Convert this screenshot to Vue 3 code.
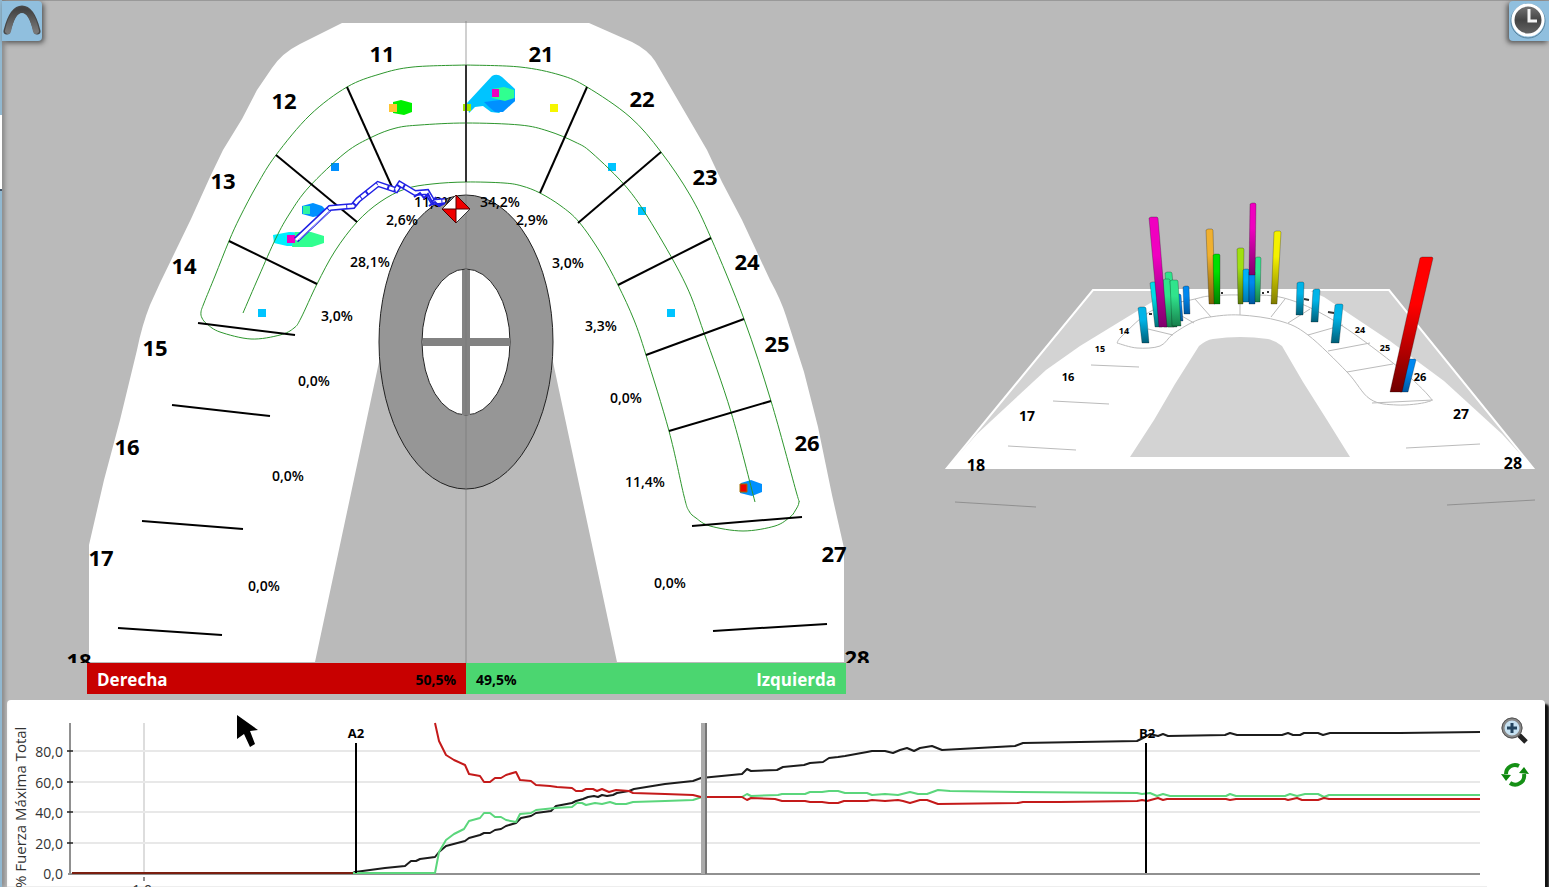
<script setup>
const smooth = (pts) => {
  let d = `M${pts[0][0]} ${pts[0][1]}`
  for (let i = 0; i < pts.length - 1; i++) {
    const a = pts[i - 1] || pts[i]
    const b = pts[i]
    const c = pts[i + 1]
    const e = pts[i + 2] || c
    d += `C${b[0] + (c[0] - a[0]) / 6} ${b[1] + (c[1] - a[1]) / 6} ${c[0] - (e[0] - b[0]) / 6} ${c[1] - (e[1] - b[1]) / 6} ${c[0]} ${c[1]}`
  }
  return d
}

const archBorder = smooth([
  [466, 65], [413, 67], [380, 74], [347, 87], [310, 115], [276, 155], [257, 185], [240, 217], [229, 241], [215, 276], [204, 303], [201, 312],
  [202, 318], [207, 324], [220, 332], [251, 339], [280, 335], [294, 328], [301, 318], [317, 284], [335, 251], [357, 222], [380, 202], [405, 189],
  [432, 184], [466, 182], [504, 183], [522, 186], [540, 193], [561, 206], [579, 222], [600, 252], [618, 285], [634, 320], [646, 355],
  [669, 431], [684, 496], [689, 511], [696, 518], [710, 526], [743, 531], [775, 526], [790, 517], [795, 511], [799, 502], [796, 491], [771, 401],
  [744, 319], [711, 238], [690, 195], [661, 152], [630, 117], [587, 87], [560, 75], [520, 67], [466, 65]
])
const archMiddle = smooth([
  [243, 313], [259, 276], [276, 238], [290, 213], [309, 187], [345, 153], [372, 137], [396, 128], [420, 125], [466, 123], [520, 125],
  [548, 131], [575, 142], [592, 153], [628, 189], [655, 229], [686, 285], [704, 333], [731, 412], [755, 502]
])

const dividers = [
  [347, 87, 392, 187], [276, 155, 357, 222], [229, 241, 317, 284], [198, 323, 295, 335], [172, 405, 270, 416], [142, 521, 243, 529],
  [118, 628, 222, 635], [587, 87, 540, 193], [661, 152, 578, 223], [711, 238, 618, 285], [744, 319, 646, 355], [771, 401, 669, 431],
  [802, 517, 692, 526], [827, 624, 713, 631]
]

const teeth = [
  ['11', 382, 62], ['12', 284, 109], ['13', 223, 189], ['14', 184, 274], ['15', 155, 356], ['16', 127, 455], ['17', 101, 566], ['18', 79, 669],
  ['21', 541, 62], ['22', 642, 107], ['23', 705, 185], ['24', 747, 270], ['25', 777, 352], ['26', 807, 451], ['27', 834, 562], ['28', 857, 666]
]

const forces = [
  ['11,8%', 434, 207], ['2,6%', 402, 225], ['28,1%', 370, 267], ['3,0%', 337, 321], ['0,0%', 314, 386], ['0,0%', 288, 481], ['0,0%', 264, 591],
  ['34,2%', 500, 207], ['2,9%', 532, 225], ['3,0%', 568, 268], ['3,3%', 601, 331], ['0,0%', 626, 403], ['11,4%', 645, 487], ['0,0%', 670, 588]
]

const contacts = [
  [331, 163, '#0090ff'], [608, 163, '#00c4ff'], [638, 207, '#00c4ff'], [667, 309, '#00c4ff'], [258, 309, '#00c4ff'], [550, 104, '#f6f600']
]

const sceneBorder = smooth([
  [1117, 343], [1123, 335], [1153, 310], [1195, 299], [1210, 296], [1240, 295], [1284, 298], [1333, 320], [1393, 363], [1428, 395],
  [1427, 402], [1397, 405], [1370, 399], [1347, 372], [1308, 335], [1280, 321], [1240, 315], [1210, 317], [1193, 322], [1173, 334],
  [1160, 346], [1137, 348], [1117, 343]
])
const sceneLines = [
  [1195, 299, 1211, 317], [1240, 296, 1240, 315], [1285, 299, 1271, 317], [1310, 309, 1288, 323], [1343, 325, 1308, 335],
  [1370, 343, 1328, 351], [1393, 364, 1347, 372], [1372, 403, 1433, 400], [1148, 329, 1173, 335], [1180, 315, 1194, 323],
  [1091, 365, 1139, 367], [1053, 401, 1109, 404], [1008, 446, 1076, 450], [1406, 448, 1480, 444]
]
const frontLines = [[955, 502, 1036, 507], [1447, 505, 1535, 500]]
const sceneTeeth = [
  ['18', 976, 471, 'large'], ['28', 1513, 469, 'large'], ['17', 1027, 421, 'medium'], ['27', 1461, 419, 'medium'], ['16', 1068, 381, 'small'],
  ['26', 1420, 381, 'small'], ['15', 1100, 352, 'tiny'], ['25', 1385, 351, 'tiny'], ['14', 1124, 334, 'tiny'], ['24', 1360, 333, 'tiny']
]

// Each column: top left, top right, top y, bottom left, bottom right, bottom y, colour
const columns = [
  [1138, 1146, 308, 1142, 1149, 343, 'cyan'], [1150, 1157, 283, 1155, 1162, 327, 'aqua'], [1177, 1181, 295, 1178, 1183, 321, 'blue'],
  [1183, 1189, 287, 1184, 1190, 314, 'blue'], [1165, 1172, 273, 1168, 1177, 327, 'teal'], [1163, 1170, 280, 1164, 1174, 327, 'teal'],
  [1170, 1178, 281, 1172, 1181, 326, 'teal'], [1149, 1158, 218, 1159, 1167, 327, 'magenta'], [1206, 1213, 230, 1209, 1215, 304, 'orange'],
  [1213, 1220, 255, 1214, 1220, 304, 'green'], [1237, 1244, 249, 1238, 1243, 304, 'lime'], [1243, 1249, 270, 1243, 1249, 302, 'sky'],
  [1255, 1261, 258, 1254, 1260, 302, 'teal'], [1249, 1255, 272, 1249, 1255, 304, 'blue'], [1250, 1256, 204, 1249, 1255, 275, 'magenta'],
  [1274, 1281, 232, 1271, 1277, 304, 'yellow'], [1297, 1304, 283, 1296, 1303, 315, 'cyan'], [1313, 1320, 290, 1311, 1318, 322, 'cyan'],
  [1335, 1343, 305, 1331, 1339, 343, 'cyan'], [1408, 1416, 360, 1400, 1408, 392, 'blue'], [1420, 1433, 258, 1390, 1402, 392, 'red']
]
const shades = [
  ['cyan', '#00b4e8', '#005f78'], ['aqua', '#00dce8', '#006f78'], ['blue', '#0088f0', '#0058a0'], ['teal', '#30e48c', '#18804c'],
  ['magenta', '#f000c0', '#80006c'], ['orange', '#f0b030', '#806008'], ['green', '#00e000', '#008000'], ['lime', '#a0e010', '#587808'],
  ['sky', '#00b0f8', '#0078b0'], ['yellow', '#f4f000', '#807c00'], ['red', '#ff0000', '#700000']
]
const columnPoints = (c) => `${c[0]},${c[2]} ${c[0] + 2},${c[2] - 1} ${c[1] - 1},${c[2] - 1} ${c[1]},${c[2]} ${c[4]},${c[5]} ${c[3]},${c[5]}`

const levels = [['80,0', 751], ['60,0', 782], ['40,0', 812], ['20,0', 843]]

const baseline = '72,873 353,873'
const rightCurve = '435,723 439,741 446,755 454,760 465,765 469,774 480,776 484,782 490,782 495,778 501,778 506,775 516,772 520,780 531,781 536,785 550,786 557,787 572,788 576,791 582,791 586,789 593,789 597,791 602,789 609,792 616,790 629,791 633,793 665,794 693,795 701,797 742,797 747,800 751,798 775,799 782,801 805,801 810,802 822,802 829,803 838,803 844,801 867,801 872,800 885,801 898,800 903,801 910,803 920,800 927,800 938,804 1018,803 1023,802 1060,802 1137,801 1142,800 1147,801 1158,798 1163,800 1167,799 1226,799 1230,800 1236,799 1285,799 1288,800 1297,798 1302,800 1318,800 1324,798 1329,799 1480,799'
const leftCurve = '353,873 435,873 439,852 446,840 454,834 464,829 469,821 480,818 484,813 490,813 495,817 501,817 506,820 516,822 520,814 531,813 536,810 555,808 572,807 577,803 582,803 586,805 595,803 602,804 610,802 616,804 626,804 633,802 665,801 693,800 702,797 742,797 747,794 751,796 778,795 782,794 805,794 810,792 822,792 829,791 838,791 845,793 867,793 872,795 885,794 898,795 910,792 918,794 927,794 938,790 950,791 1018,792 1137,793 1142,794 1150,793 1157,796 1163,794 1170,796 1226,796 1230,794 1236,796 1285,796 1290,794 1297,796 1305,794 1318,794 1324,797 1329,795 1480,795'
const totalCurve = '353,873 355,872 370,870 385,868 405,866 411,861 416,861 420,859 435,857 439,852 446,846 465,841 469,838 480,835 484,833 490,833 495,830 501,829 506,826 516,823 521,818 531,816 536,813 551,811 556,806 572,803 576,801 583,799 588,797 594,796 598,797 602,795 607,796 613,795 617,793 629,791 634,789 665,784 693,781 701,778 742,774 747,769 751,771 777,770 783,767 804,765 810,763 823,762 829,758 838,757 845,756 867,752 872,751 885,751 893,753 900,750 907,748 914,751 920,748 932,746 942,750 1015,746 1023,743 1137,741 1145,737 1150,734 1158,736 1163,734 1168,736 1225,735 1230,733 1237,735 1282,735 1288,733 1293,735 1300,735 1304,733 1318,733 1323,735 1330,733 1400,733 1480,732'

const trace = '296,240 330,208 353,206 358,200 378,184 396,190 400,184 415,193 427,192 433,202 445,201'
</script>

<template>
  <main class="page">
    <div class="edge"><span class="edge-blue"></span><span class="edge-white"></span><span class="edge-rest"></span></div>
    <button class="tab tab-left" type="button" aria-label="Arcada">
      <svg viewBox="0 0 40 40" aria-hidden="true">
        <defs>
          <linearGradient id="tube" x1="0" x2="0" y1="0" y2="1">
            <stop offset="0" stop-color="#444" /><stop offset="1" stop-color="#777" />
          </linearGradient>
        </defs>
        <path d="M5 30C9 14 14 8 20 8s11 6 15 22" fill="none" stroke="#484848" stroke-width="7" stroke-linecap="round" />
        <path d="M6 30C9 16 14 9 20 9s11 7 14 21" fill="none" stroke="url(#tube)" stroke-width="6" stroke-linecap="round" />
      </svg>
    </button>
    <button class="tab tab-right" type="button" aria-label="Tiempo">
      <svg viewBox="0 0 40 40" aria-hidden="true">
        <defs>
          <linearGradient id="dial" x1="0" x2="0" y1="0" y2="1">
            <stop offset="0" stop-color="#777" /><stop offset=".5" stop-color="#444" /><stop offset="1" stop-color="#666" />
          </linearGradient>
        </defs>
        <circle cx="19" cy="20" r="17" fill="none" stroke="#56809a" stroke-width="1" />
        <circle cx="19" cy="19" r="15" fill="url(#dial)" stroke="#fff" stroke-width="3" />
        <path d="M20 8v12h8" fill="none" stroke="#f4f4f4" stroke-width="3" />
      </svg>
    </button>

    <section class="views">
      <div class="arch-column">
        <svg class="arch" viewBox="0 0 930 663" role="img" aria-label="Arcada dental">
          <path fill="#fff" d="M342 23H589L632 42Q648 50 655 61L672 90L707 150L722 182L742 220L770 280Q781 300 786 316L804 372L818 427L832 495L844 548V662H617L553 362L466 250L379 362L315 662H89V545L104 480L120 420L137 350Q142 325 150 305L160 283L191 219L210 177L223 150L242 119L257 90L272 68Q282 53 300 44Z" />
          <path :d="archBorder" fill="none" stroke="#2d962d" />
          <path d="M393 102l8-2 11 3v9l-8 3-11-2z" fill="#00f000" /><path d="M389 104h8v8h-8z" fill="#ffc430" />
          <path d="M467 103l25-27q5-3 10 1l13 12v12l-16 12-8-1-8-6-8 1-6 6z" fill="#00c4ff" />
          <path d="M484 102l31-4v3l-12 11h-8l-6-5z" fill="#0090ff" />
          <path d="M492 89l12-2 10 3v8l-9 3-13-3z" fill="#30ff90" /><path d="M492 89h7v8h-7z" fill="#f000c0" />
          <path d="M463 104h8v7h-8z" fill="#a0e800" />
          <path d="M302 206l11-3 9 3 4 4-3 5-10 2-11-3z" fill="#0090ff" /><path d="M303 206h7v8h-7z" fill="#30f4a0" />
          <path d="M273 235l16-3 20 1v13h-22l-13-3z" fill="#00f0ff" /><path d="M295 232h16l13 4v7l-12 4h-20z" fill="#30ff90" /><path d="M287 235h8v8h-8z" fill="#f000c0" />
          <path d="M741 483l10-3 11 4v8l-10 4-12-3z" fill="#0090ff" /><path d="M740 484h7v8h-7z" fill="#f00000" stroke="#a07000" />
          <rect v-for="(c, i) in contacts" :key="i" :x="c[0]" :y="c[1]" width="8" height="8" :fill="c[2]" />
          <path :d="archMiddle" fill="none" stroke="#2d962d" />
          <line v-for="(l, i) in dividers" :key="'d' + i" :x1="l[0]" :y1="l[1]" :x2="l[2]" :y2="l[3]" stroke="#000" stroke-width="2" />
          <ellipse cx="466" cy="342" rx="87" ry="147" fill="#969696" stroke="#222" />
          <ellipse cx="466" cy="342" rx="44" ry="73" fill="#fff" stroke="#222" />
          <path d="M466 270V415M423 342H510" stroke="#828282" stroke-width="8" />
          <path d="M466 21V663" stroke="#777" stroke-width="2" stroke-opacity=".35" />
          <path d="M466 65V182" stroke="#333" stroke-width="2" />
          <text v-for="t in teeth" :key="t[0]" class="tooth" :x="t[1]" :y="t[2]">{{ t[0] }}</text>
          <text v-for="(f, i) in forces" :key="'f' + i" class="force" :x="f[1]" :y="f[2]">{{ f[0] }}</text>
          <g fill="none">
            <polyline :points="trace" stroke="#2020e4" stroke-width="6" />
            <polyline :points="trace" stroke="#fff" stroke-width="3" stroke-dasharray="44 1 18 1 7 2 8 1 6 2 12 1 10 2 5 2 4 2 5 2" />
            <path d="M299 240L330 211" stroke="#9090f4" />
            <path d="M414 197l6-4 4 5 4-4 4 8 4-5M429 206l6-4 4 4 6-3" stroke="#2020e4" stroke-width="2" />
          </g>
          <path d="M456 195l14 14-14 14-14-14z" fill="#fff" stroke="#333" />
          <path d="M456 195l14 14h-14zM456 209v14l-14-14z" fill="#f00000" stroke="#500000" />
        </svg>
        <div class="balance">
          <div class="side side-right"><strong>Derecha</strong><span>50,5%</span></div>
          <div class="side side-left"><span>49,5%</span><strong>Izquierda</strong></div>
        </div>
      </div>

      <svg class="scene" viewBox="930 0 619 663" role="img" aria-label="Vista 3D">
        <defs>
          <linearGradient v-for="s in shades" :id="'shade-' + s[0]" :key="s[0]" x1="0" x2="0" y1="0" y2="1">
            <stop offset="0" :stop-color="s[1]" /><stop offset=".35" :stop-color="s[1]" /><stop offset="1" :stop-color="s[2]" />
          </linearGradient>
        </defs>
        <path d="M1093 290H1389L1533 468H947Z" fill="#d3d3d3" stroke="#fff" stroke-width="2" />
        <path d="M1175 290H1308L1324 297L1390 341L1444 381L1502 434L1534 469H946L977 434L1046 370L1080 346L1152 302Z" fill="#fff" />
        <path d="M1130 457L1154 420L1175 384L1199 346Q1206 340 1213 339Q1240 335 1268 339Q1276 341 1282 346L1303 382L1327 420L1350 457Z" fill="#d3d3d3" />
        <g fill="none" stroke="#bbb">
          <path :d="sceneBorder" />
          <line v-for="(l, i) in sceneLines" :key="i" :x1="l[0]" :y1="l[1]" :x2="l[2]" :y2="l[3]" />
        </g>
        <line v-for="(l, i) in frontLines" :key="'l' + i" :x1="l[0]" :y1="l[1]" :x2="l[2]" :y2="l[3]" stroke="#909090" />
        <path d="M1149 314h3M1221 293h2M1262 293h2m3-1h2M1304 299l5 1M1328 312l6 1" stroke="#333" stroke-width="2" />
        <text v-for="t in sceneTeeth" :key="t[0]" class="mark" :class="t[3]" :x="t[1]" :y="t[2]">{{ t[0] }}</text>
        <polygon v-for="(c, i) in columns" :key="'c' + i" :points="columnPoints(c)" :fill="`url(#shade-${c[6]})`" stroke="#000" stroke-opacity=".25" />
      </svg>
    </section>

    <section class="panel">
      <svg class="chart" viewBox="7 700 1480 187" role="img" aria-label="% Fuerza Máxima Total">
        <path d="M144 723V873" stroke="#ddd" stroke-width="2" />
        <g v-for="l in levels" :key="l[0]">
          <path :d="`M70 ${l[1]}H1480`" stroke="#e8e8e8" stroke-width="2" />
          <path :d="`M67 ${l[1]}H73`" stroke="#555" stroke-width="2" />
          <text class="tick" x="63" :y="l[1] + 6">{{ l[0] }}</text>
        </g>
        <text class="tick" x="63" y="879">0,0</text>
        <path d="M70 723V873M68 874H1480M144 877v4" fill="none" stroke="#222" />
        <path d="M7 887H1487" stroke="#ddd" />
        <text class="tick" x="152" y="895">1,0</text>
        <text class="axis" transform="translate(26 888) rotate(-90)">% Fuerza Máxima Total</text>
        <g fill="none" stroke-width="2" stroke-linejoin="round">
          <polyline :points="totalCurve" stroke="#1c1c1c" />
          <polyline :points="leftCurve" stroke="#5bd67c" />
          <polyline :points="rightCurve" stroke="#c41a1a" />
          <polyline :points="baseline" stroke="#7a1f10" />
        </g>
        <path d="M356 743V873M1146 743V873" stroke="#000" stroke-width="2" />
        <text class="marker" x="356" y="738">A2</text>
        <text class="marker" x="1147" y="738">B2</text>
        <path d="M704 723V874" stroke="#aaa" stroke-width="6" />
        <path d="M706 723V874" stroke="#777" stroke-width="2" />
        <path d="M237 715l21 15-8 1 5 13-5 3-6-13-7 5z" fill="#000" />
      </svg>
      <div class="tools">
        <button class="tool" type="button" aria-label="Ampliar">
          <svg viewBox="0 0 30 30" aria-hidden="true">
            <path d="M19 19l7 7" stroke="#222" stroke-width="5" />
            <circle cx="12" cy="12" r="9" fill="#c6e1f1" stroke="#888" stroke-width="3" />
            <circle cx="12" cy="12" r="10" fill="none" stroke="#555" />
            <path d="M12 7v10M7 12h10" stroke="#24445e" stroke-width="3" />
          </svg>
        </button>
        <button class="tool" type="button" aria-label="Actualizar">
          <svg viewBox="0 0 30 30" aria-hidden="true">
            <path d="M19 6A9 9 0 0 0 6 14M10 23A9 9 0 0 0 24 14" fill="none" stroke="#159015" stroke-width="4" />
            <path d="M1 14l10 1-5 6zM29 14l-10-1 5-6z" fill="#0c860c" />
          </svg>
        </button>
      </div>
    </section>
  </main>
</template>

<style>
body { margin: 0; background: #bababa; }
</style>

<style scoped>
.page { position: relative; min-height: 100vh; overflow: hidden; background: #bababa; font-family: "Open Sans", "Noto Sans", sans-serif; box-shadow: inset 0 1px #999; }
svg { display: block; }
button { padding: 0; border: 0; cursor: pointer; }
.edge { position: absolute; inset: 0 auto 0 0; width: 2px; display: flex; flex-direction: column; box-shadow: 1px 0 5px #333; }
.edge-blue { flex: 115; background: #91b8d0; }
.edge-white { flex: 74; background: #fff; }
.edge-rest { flex: 698; background: #91b8d0; border-top: 2px solid #456; }
.tab { position: absolute; top: 1px; width: 40px; height: 40px; background: #90bfde; box-shadow: 2px 2px 5px #555; z-index: 1; }
.tab-left { left: 2px; border-radius: 0 4px 4px 0; }
.tab-right { right: 0; border-radius: 4px 0 0 4px; box-shadow: -2px 2px 5px #555; }
.views { display: grid; grid-template-columns: minmax(0, 930fr) minmax(0, 619fr); align-items: start; }
.arch, .scene { width: 100%; height: auto; }
.balance { display: grid; grid-template-columns: minmax(0, 87fr) minmax(0, 379fr) minmax(0, 380fr) minmax(0, 84fr); margin-bottom: 6px; }
.side { display: flex; align-items: center; justify-content: space-between; box-sizing: border-box; height: 31px; padding: 2px 10px 0; }
.side strong { color: #fff; font-size: 17px; line-height: 24px; }
.side span { color: #000; font-size: 14px; font-weight: 700; line-height: 20px; }
.side-right { grid-column: 2; background: #c80000; }
.side-left { grid-column: 3; background: #4bd670; }
.tooth { font-size: 22px; font-weight: 700; text-anchor: middle; }
.force { font-size: 14px; font-weight: 600; text-anchor: middle; }
.mark { font-weight: 700; text-anchor: middle; }
.large { font-size: 16px; }
.medium { font-size: 14px; }
.small { font-size: 11px; }
.tiny { font-size: 9px; }
.panel { display: flex; align-items: stretch; margin: 0 4px 0 7px; background: #fff; border-radius: 4px 4px 0 0; box-shadow: 4px 4px 2px #111; }
.chart { flex: 1; min-width: 0; height: auto; }
.tick { font-size: 14px; fill: #333; text-anchor: end; }
.axis { font-size: 15px; fill: #333; }
.marker { font-size: 13px; font-weight: 700; text-anchor: middle; }
.tools { display: flex; flex-direction: column; gap: 14px; width: 58px; padding-top: 16px; box-sizing: border-box; }
.tool { width: 30px; height: 30px; margin-left: 13px; background: transparent; }
.tool svg { width: 30px; height: 30px; }
</style>
